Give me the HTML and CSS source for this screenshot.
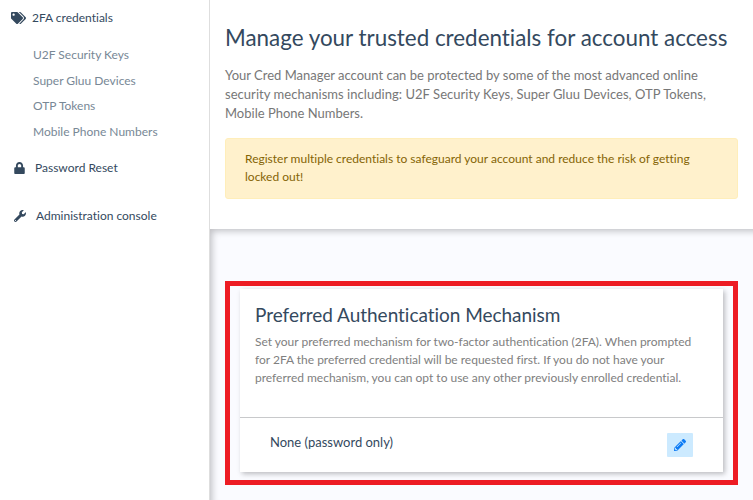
FILE: index.html
```html
<!DOCTYPE html>
<html lang="en">
<head>
<meta charset="utf-8">
<title>Cred Manager</title>
<link rel="stylesheet" href="styles.css">
</head>
<body>
<div class="app">
  <nav class="sidebar">
    <a class="item item-tags"><svg class="icon tags" viewBox="0 0 640 512"><path d="M497.941 225.941L286.059 14.059A48 48 0 0 0 252.118 0H48C21.49 0 0 21.49 0 48v204.118a48 48 0 0 0 14.059 33.941l211.882 211.882c18.744 18.745 49.136 18.746 67.882 0l204.118-204.118c18.745-18.745 18.745-49.137 0-67.882zM112 160c-26.51 0-48-21.49-48-48s21.49-48 48-48 48 21.49 48 48-21.49 48-48 48zm513.941 133.823L421.823 497.941c-18.745 18.745-49.137 18.745-67.882 0l-.36-.36L527.64 323.522c16.999-16.999 26.36-39.6 26.36-63.64s-9.362-46.641-26.36-63.64L331.397 0h48.721a48 48 0 0 1 33.941 14.059l211.882 211.882c18.745 18.745 18.745 49.137 0 67.882z"/></svg><span>2FA credentials</span></a>
    <div class="subs">
      <a>U2F Security Keys</a>
      <a>Super Gluu Devices</a>
      <a>OTP Tokens</a>
      <a>Mobile Phone Numbers</a>
    </div>
    <a class="item item-lock"><svg class="icon lock" viewBox="0 0 448 512"><path d="M400 224h-24v-72C376 68.2 307.8 0 224 0S72 68.2 72 152v72H48c-26.5 0-48 21.5-48 48v192c0 26.5 21.5 48 48 48h352c26.5 0 48-21.5 48-48V272c0-26.5-21.5-48-48-48zm-104 0H152v-72c0-39.7 32.3-72 72-72s72 32.3 72 72v72z"/></svg><span>Password Reset</span></a>
    <a class="item item-wrench"><svg class="icon wrench" viewBox="0 0 512 512"><path d="M507.73 109.1c-2.24-9.03-13.54-12.09-20.12-5.51l-74.36 74.36-67.88-11.31-11.31-67.88 74.36-74.36c6.62-6.62 3.43-17.9-5.66-20.16-47.38-11.74-99.55.91-136.58 37.93-39.64 39.64-50.55 97.1-34.05 147.2L18.74 402.76c-24.99 24.99-24.99 65.51 0 90.5 24.99 24.99 65.51 24.99 90.5 0l213.21-213.21c50.12 16.71 107.47 5.68 147.37-34.22 37.07-37.07 49.7-89.32 37.91-136.73zM64 472c-13.25 0-24-10.75-24-24 0-13.26 10.75-24 24-24s24 10.74 24 24c0 13.25-10.75 24-24 24z"/></svg><span>Administration console</span></a>
  </nav>
  <main class="main">
    <header class="intro">
      <h1>Manage your trusted credentials for account access</h1>
      <p class="lead">Your Cred Manager account can be protected by some of the most advanced online<br><span class="wide">security mechanisms including: U2F Security Keys, Super Gluu Devices, OTP Tokens,</span><br>Mobile Phone Numbers.</p>
      <div class="alert">Register multiple credentials to safeguard your account and reduce the risk of getting<br>locked out!</div>
    </header>
    <section class="content">
      <div class="highlight">
        <article class="card">
          <div class="card-top">
            <h2>Preferred Authentication Mechanism</h2>
            <p>Set your preferred mechanism for two-factor authentication (2FA). When prompted<br>for 2FA the preferred credential will be requested first. If you do not have your<br>preferred mechanism, you can opt to use any other previously enrolled credential.</p>
          </div>
          <div class="card-row">
            <span class="method">None (password only)</span>
            <button class="edit" type="button"><svg class="pencil" viewBox="0 0 512 512"><path d="M497.9 142.1l-46.1 46.1c-4.7 4.7-12.3 4.7-17 0l-111-111c-4.7-4.7-4.7-12.3 0-17l46.1-46.1c18.7-18.7 49.1-18.7 67.9 0l60.1 60.1c18.8 18.7 18.8 49.1 0 67.9zM284.2 99.8L21.6 362.4.4 483.9c-2.9 16.4 11.4 30.6 27.8 27.8l121.5-21.3 262.6-262.6c4.7-4.7 4.7-12.3 0-17l-111-111c-4.8-4.7-12.4-4.7-17.1 0zM124.1 339.9c-5.5-5.5-5.5-14.3 0-19.8l154-154c5.5-5.5 14.3-5.5 19.8 0s5.5 14.3 0 19.8l-154 154c-5.5 5.5-14.3 5.5-19.8 0zM88 424h48v36.3l-64.5 11.3-31.1-31.1L51.7 376H88v48z"/></svg></button>
          </div>
        </article>
      </div>
    </section>
  </main>
</div>
</body>
</html>
```
FILE: styles.css
```css
* { box-sizing: border-box; }
body { margin: 0; font-family: Lato, sans-serif; font-variant-ligatures: none; color: #34495e; background: #fff; }
h1, h2, p { margin: 0; font-weight: 400; white-space: nowrap; }
.app { display: flex; height: 500px; overflow: hidden; }
.sidebar { width: 210px; flex: none; border-right: 1px solid #dedede; font-size: 12px; white-space: nowrap; }
.item { display: flex; align-items: center; height: 20px; }
.item span { padding-bottom: 1px; }
.icon { fill: #34495e; flex: none; height: 12px; }
.item-tags { margin-top: 8px; padding-left: 11px; gap: 6px; }
.item-tags span { padding-bottom: 2px; }
.tags { width: 15px; }
.subs { margin: 14px 0 0 33px; color: #788896; }
.subs a { display: block; height: 25.6px; line-height: 25.6px; }
.item-lock { margin-top: 13.6px; padding-left: 14px; gap: 10px; }
.lock { width: 11px; }
.item-wrench { margin-top: 28px; padding-left: 14px; gap: 10px; }
.wrench { width: 12px; }
.main { flex: 1; display: flex; flex-direction: column; min-width: 0; }
.intro { height: 229px; padding: 20px 15px 0; background: #fff; }
h1 { font-size: 22.4px; line-height: 36px; }
.lead { margin-top: 10px; font-size: 13px; line-height: 19px; color: #777; }
.wide { letter-spacing: .04px; }
.alert { margin-top: 15px; height: 61px; padding: 11px 19px; border: 1px solid #ffeeba; border-radius: 3px; background: #fff1cc; color: #856404; font-size: 12px; line-height: 18px; white-space: nowrap; }
.content { flex: 1; padding: 52px 15px 15px; background: #fafbff; box-shadow: inset 5px 5px 7px -3px rgba(0, 0, 0, .24); }
.highlight { height: 204px; padding: 3px 10px 8px; border: 5px solid #ed1c24; }
.card { height: 183px; display: flex; flex-direction: column; background: #fff; box-shadow: 2px 2px 5px rgba(0, 0, 0, .25); }
.card-top { height: 129px; padding: 12px 15px 0; border-bottom: 1px solid #c8c9cb; }
h2 { font-size: 19px; line-height: 28px; letter-spacing: -.03px; }
.card-top p { margin-top: 4px; font-size: 12px; line-height: 18px; color: #808080; letter-spacing: -.01px; }
.card-row { flex: 1; display: flex; justify-content: space-between; padding: 15px 30px 0; }
.method { font-size: 13px; line-height: 18px; }
.edit { display: flex; align-items: center; justify-content: center; width: 26px; height: 24px; padding: 0; border: 0; border-radius: 1px; background: #cceaff; }
.pencil { width: 12px; height: 12px; fill: #0d7bf5; }
```
